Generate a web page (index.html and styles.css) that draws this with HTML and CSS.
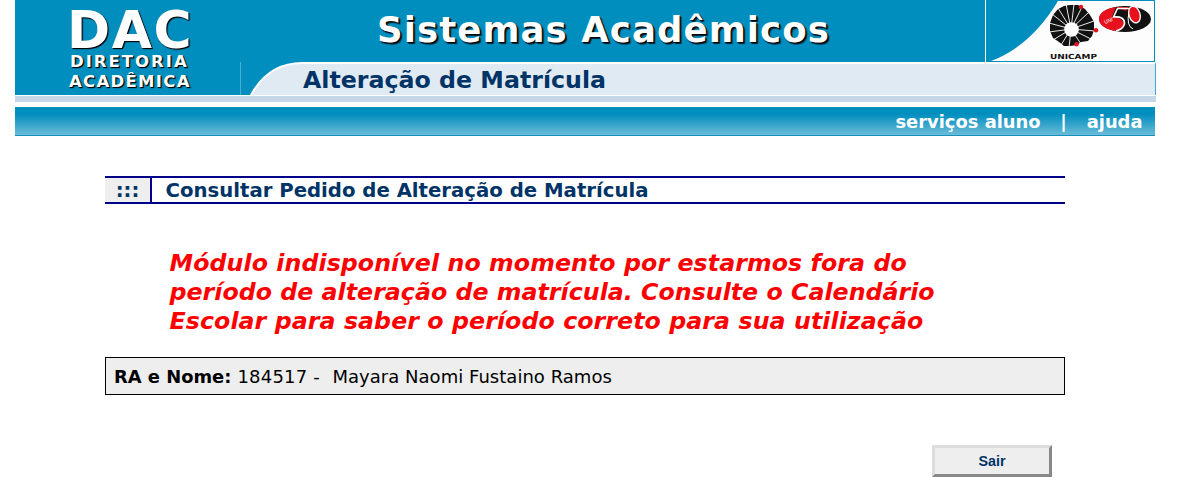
FILE: index.html
```html
<!DOCTYPE html>
<html lang="pt-BR">
<head>
<meta charset="utf-8">
<title>DAC - Alteração de Matrícula</title>
<link rel="stylesheet" href="styles.css">
</head>
<body>
<header class="banner">
  <div class="brand">
    <div class="brand-dac">DAC</div>
    <div class="brand-line brand-dir">DIRETORIA</div>
    <div class="brand-line brand-aca">ACADÊMICA</div>
  </div>
  <div class="banner-main">
    <div class="banner-top">
      <h1 class="system-title">Sistemas Acadêmicos</h1>
      <svg class="logos" width="171" height="62" viewBox="985 0 171 62">
        <path d="M985.5 0V62" stroke="#fff"/>
        <path d="M1058 1H1154V61H991Q1031 46 1058 1Z" fill="#fdfdfd"/>
        <path d="M1155.5 0V62" stroke="#fff"/>
        <path d="M1064 6L1070 5L1078 5L1085 9L1090 15L1094 22L1094 30L1092 36L1088 41L1081 42L1077 45L1070 46L1064 46L1059 42L1053 38L1050 31L1050 23L1053 15L1058 9Z" fill="#111"/>
        <g stroke="#fff" stroke-width="0.9">
          <path d="M1071 29L1066 4M1071 29L1074 4M1071 29L1058 8M1071 29L1082 7M1071 29L1052 14M1071 29L1089 12M1071 29L1049 23M1071 29L1094 21M1071 29L1049 32M1071 29L1095 31M1071 29L1053 40M1071 29L1091 39M1071 29L1061 45M1071 29L1081 44M1071 29L1069 48"/>
        </g>
        <circle cx="1071.5" cy="29.5" r="7.3" fill="#fff"/>
        <g fill="#e8101c"><circle cx="1081" cy="7" r="2.2"/><circle cx="1096" cy="30.3" r="2.2"/><circle cx="1076.5" cy="44.3" r="2.2"/></g>
        <text class="unicamp" x="1050" y="58.5" textLength="47" lengthAdjust="spacingAndGlyphs">UNICAMP</text>
        <ellipse cx="1125" cy="19" rx="26" ry="13" fill="#111"/>
        <path d="M1116 7Q1099 10 1099 19Q1100 29 1117 31Q1125 30 1124 23Q1121 17 1112 17L1116 7H1128L1126 11Z" fill="#e8101c"/>
        <path d="M1130 8.5H1117.5L1113.500 17Q1125 16 1124.500 24Q1123 29 1116 31" fill="none" stroke="#fff" stroke-width="1.6"/>
        <path d="M1129 12Q1126 26 1133 29" fill="none" stroke="#fff" stroke-width="1"/>
        <ellipse cx="1134.500" cy="14.5" rx="5.5" ry="8.5" transform="rotate(-18 1134.5 14.5)" fill="#e8101c" stroke="#fff" stroke-width="1.3"/>
        <text class="anos" x="1105" y="24" transform="rotate(-22 1105 24)">UNI</text>
      </svg>
    </div>
    <div class="tab">
      <svg class="tab-curve" width="61" height="33" viewBox="0 0 61 33">
        <path d="M10 33C20 15 36 1 61 1V33Z" fill="#e0eaf3"/>
        <path d="M10 33C20 15 36 1 61 1" fill="none" stroke="#fff" stroke-width="2"/>
      </svg>
      <div class="tab-title">Alteração de Matrícula</div>
    </div>
  </div>
</header>
<nav class="menu">
  <a class="menu-link">serviços aluno</a><span class="menu-sep">|</span><a class="menu-link">ajuda</a>
</nav>
<main class="content">
  <div class="section-head">
    <span class="section-mark">:::</span>
    <h2 class="section-title">Consultar Pedido de Alteração de Matrícula</h2>
  </div>
  <p class="notice"><span class="notice-first">Módulo indisponível no momento por estarmos fora do</span><br>período de alteração de matrícula. Consulte o Calendário<br><span class="notice-last">Escolar para saber o período correto para sua utilização</span></p>
  <div class="student"><b class="student-label">RA e Nome:</b><span class="student-id">184517 -</span><span class="student-name">Mayara Naomi Fustaino Ramos</span></div>
  <div class="actions"><button class="exit" type="button">Sair</button></div>
</main>
</body>
</html>
```
FILE: styles.css
```css
body {
  margin: 0;
  background: #fff;
  font-family: "DejaVu Sans", Verdana, sans-serif;
}
.banner {
  display: flex;
  width: 1141px;
  height: 96px;
  margin-left: 15px;
  background: #008ebf;
  border-bottom: 6px solid #c5d7e9;
  box-shadow: inset 0 -1px #fff;
  color: #fff;
  font-weight: bold;
}
.brand {
  flex: none;
  box-sizing: border-box;
  width: 225px;
  padding: 2px 0 0 50px;
  text-shadow: 1px 1px 1px #000, 1px 1px 1px #123;
}
.brand-dac { padding-left: 2px; font-size: 52px; line-height: 56px; height: 50px; letter-spacing: 1.5px; }
.brand-line { font-size: 16.5px; line-height: 19.5px; }
.brand-dir { padding-left: 5px; letter-spacing: 2px; }
.brand-aca { padding-left: 4px; letter-spacing: 1.3px; }
.banner-main { flex: 1; }
.banner-top { display: flex; height: 62px; }
.system-title {
  flex: 1;
  margin: 0;
  padding-left: 137px;
  font-size: 35.5px;
  line-height: 59px;
  letter-spacing: 1.1px;
  white-space: nowrap;
  text-shadow: 1px 1px 1px #000, 2px 2px 1px #123;
}
.logos { display: block; flex: none; }
.unicamp { font: bold 7px "DejaVu Sans", sans-serif; fill: #111; }
.anos { font: 5px "DejaVu Sans", sans-serif; fill: #fff; }
.tab { display: flex; height: 33px; }
.tab-curve { display: block; flex: none; border-left: 1px solid #4aaed0; }
.tab-title {
  flex: 1;
  box-sizing: border-box;
  height: 33px;
  padding-left: 1px;
  border-top: 2px solid #fff;
  border-right: 1px solid #3fa8ce;
  background: #e0eaf3;
  color: #036;
  font-size: 23.7px;
  line-height: 33px;
}
.menu {
  display: flex;
  justify-content: flex-end;
  box-sizing: border-box;
  width: 1140px;
  height: 29px;
  margin: 5px 0 0 15px;
  padding-right: 12.5px;
  border-bottom: 1px solid #1691bd;
  background: linear-gradient(#008ebf 25%, #6bbbd8);
  color: #fff;
  font-size: 17.9px;
  font-weight: bold;
  line-height: 29px;
}
.menu-sep { margin: 0 20px 0 19.5px; }
.content { width: 960px; margin: 40px 0 0 105px; }
.section-head {
  display: flex;
  height: 24px;
  border-top: 2px solid #00008b;
  border-bottom: 2px solid #00008b;
  color: #036;
  font-size: 19.7px;
  font-weight: bold;
  line-height: 26px;
}
.section-mark {
  flex: none;
  box-sizing: border-box;
  width: 47px;
  height: 24px;
  border-right: 2px solid #00008b;
  background: #eee;
  text-align: center;
}
.section-title { margin: 0; padding-left: 13.5px; font-size: inherit; white-space: nowrap; }
.notice {
  margin: 45px 0 0 64.5px;
  color: #f00;
  font-size: 23.7px;
  font-weight: bold;
  font-style: italic;
  line-height: 29px;
  letter-spacing: 0.02px;
  white-space: nowrap;
}
.notice-first, .notice-last { letter-spacing: 0.07px; }
.student {
  display: flex;
  box-sizing: border-box;
  height: 38px;
  margin-top: 21px;
  padding-left: 8px;
  border: 1px solid #000;
  background: #eee;
  font-size: 18px;
  line-height: 37px;
  white-space: nowrap;
}
.student-label { font-size: 17.9px; }
.student-id { margin-left: 6px; letter-spacing: 0.2px; }
.student-name { margin-left: 12.5px; letter-spacing: 0.03px; }
.actions { display: flex; justify-content: flex-end; padding: 50px 13px 0 0; }
.exit {
  width: 120px;
  height: 32px;
  padding: 0;
  border: 3px solid;
  border-color: #ddd #888 #888 #ddd;
  background: #eee;
  color: #036;
  font: bold 14.3px "Liberation Sans", Arial, sans-serif;
}
```
